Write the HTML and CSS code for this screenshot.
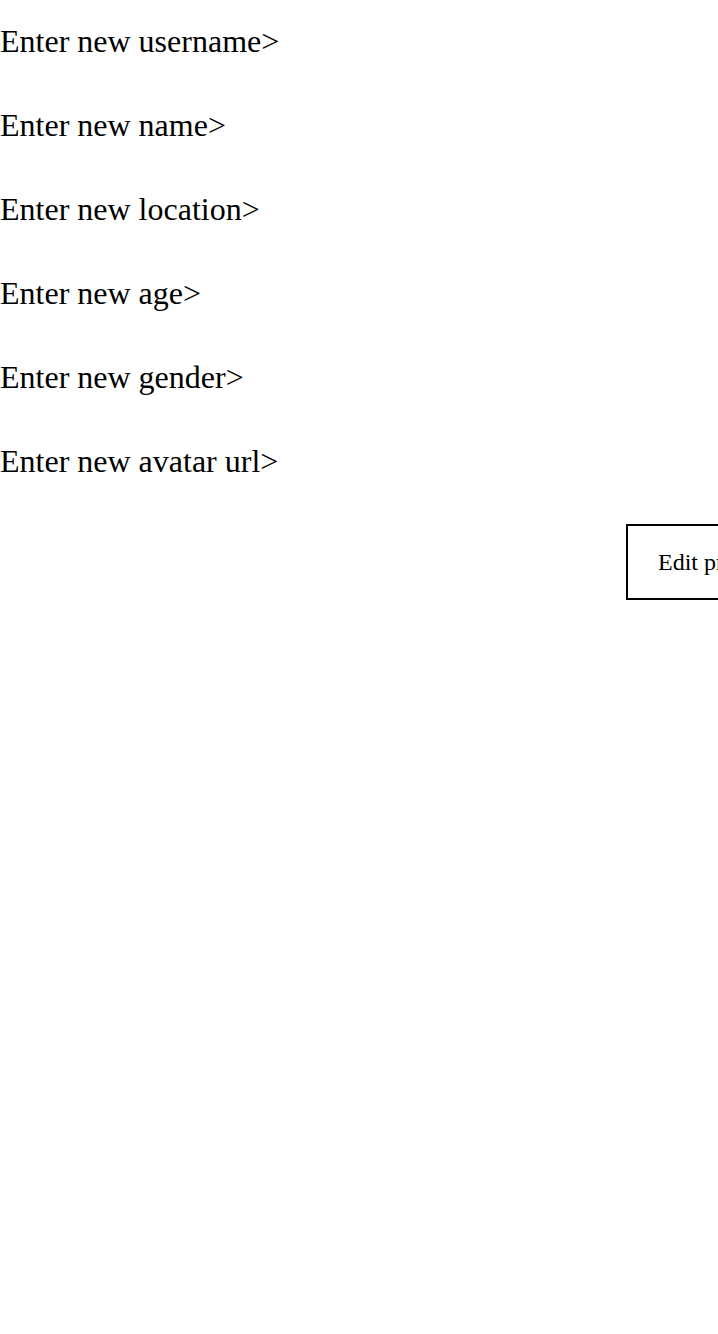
FILE: index.html
```html
<!DOCTYPE html>
<html>
<head>
<meta charset="utf-8">
<link rel="stylesheet" href="styles.css">
</head>
<body>
<div class="form">
  <div class="row">Enter new username&gt;</div>
  <div class="row">Enter new name&gt;</div>
  <div class="row">Enter new location&gt;</div>
  <div class="row">Enter new age&gt;</div>
  <div class="row">Enter new gender&gt;</div>
  <div class="row">Enter new avatar url&gt;</div>
</div>
<div class="actions">
  <button class="edit">Edit profile</button>
</div>
</body>
</html>
```
FILE: styles.css
```css
html, body {
  margin: 0;
  padding: 0;
  overflow: hidden;
  background: #fff;
}
body {
  font-family: "Liberation Serif", "Times New Roman", serif;
  color: #000;
  width: 718px;
  height: 1334px;
}
.form {
  display: flex;
  flex-direction: column;
  gap: 47px;
  padding-top: 23px;
}
.row {
  font-size: 32px;
  line-height: 37px;
  white-space: nowrap;
}
.actions {
  display: flex;
  padding-left: 626px;
  margin-top: 44px;
}
.edit {
  flex: none;
  font-family: "Liberation Serif", "Times New Roman", serif;
  font-size: 24px;
  line-height: 28px;
  padding: 22px 30px;
  border: 2px solid #000;
  background: #fff;
  color: #000;
  white-space: nowrap;
  border-radius: 0;
}
```
